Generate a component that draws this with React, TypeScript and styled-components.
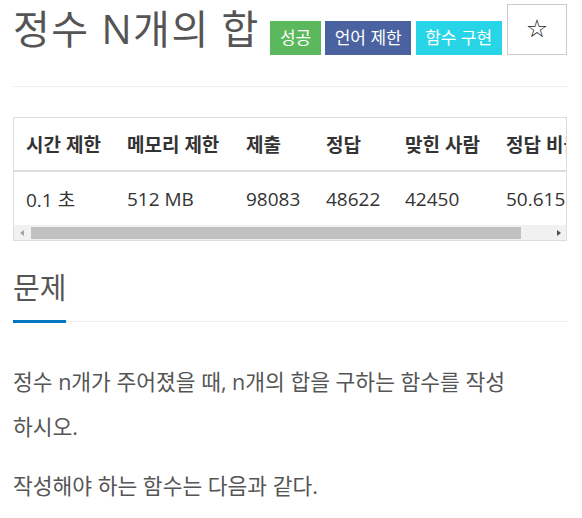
import React from "react";
import styled, { createGlobalStyle } from "styled-components";

const Global = createGlobalStyle`
  html, body { margin: 0; padding: 0; background: #fff; overflow: hidden; }
  body { font-family: "Open Sans", "Noto Sans CJK KR", sans-serif; color: #555; }
`;

const Page = styled.div`
  padding: 0 15px 0 13px;
`;

const Header = styled.div`
  display: flex;
  justify-content: space-between;
  align-items: flex-start;
  height: 87px;
  box-sizing: border-box;
  padding-top: 4px;
  border-bottom: 1px solid #eee;
`;

const Title = styled.h1`
  display: flex;
  align-items: baseline;
  gap: 4.5px;
  margin: 3px 0 0 0;
  font-weight: 400;
`;

const TitleText = styled.span`
  font-size: 40px;
  letter-spacing: 1.5px;
  line-height: 1.1;
  color: #555;
  margin-right: 6px;
`;

const Label = styled.span<{ $bg: string }>`
  display: inline-block;
  background: ${(p) => p.$bg};
  color: #fff;
  font-size: 17px;
  line-height: 34px;
  height: 34px;
  padding: 0 9.5px;
  white-space: nowrap;
`;

const StarButton = styled.button`
  width: 60px;
  height: 51px;
  border: 1px solid #ccc;
  background: #fff;
  padding: 0 0 2px 0;
  font-family: "DejaVu Sans", sans-serif;
  font-size: 25px;
  color: #222;
  display: flex;
  align-items: center;
  justify-content: center;
`;

const TableWrap = styled.div`
  margin-top: 30px;
  border: 1px solid #ddd;
`;

const Viewport = styled.div`
  overflow: hidden;
`;

const Table = styled.table`
  width: 587px;
  table-layout: fixed;
  border-collapse: collapse;
  color: #333;
`;

const Th = styled.th`
  height: 52px;
  padding: 0 12px;
  text-align: left;
  font-weight: 700;
  font-size: 19px;
  white-space: nowrap;
  overflow: hidden;
  border-bottom: 2px solid #ddd;
  vertical-align: middle;
`;

const Td = styled.td`
  height: 53px;
  padding: 0 12px;
  font-size: 19px;
  white-space: nowrap;
  vertical-align: middle;
`;

const ScrollBar = styled.div`
  display: flex;
  height: 15px;
  background: #f1f1f1;
`;

const ArrowButton = styled.div<{ $dir: "left" | "right"; $color: string }>`
  width: 15px;
  height: 15px;
  display: flex;
  align-items: center;
  justify-content: center;
  &::before {
    content: "";
    width: 0;
    height: 0;
    border-top: 3.5px solid transparent;
    border-bottom: 3.5px solid transparent;
    ${(p) =>
      p.$dir === "left"
        ? `border-right: 4px solid ${p.$color};`
        : `border-left: 4px solid ${p.$color};`}
  }
`;

const Track = styled.div`
  flex: 1;
  display: flex;
  align-items: center;
`;

const Thumb = styled.div`
  margin-left: 2px;
  width: 490px;
  height: 12px;
  background: #c1c1c1;
`;

const Headline = styled.div`
  margin-top: 31px;
  display: flex;
  border-bottom: 1px dotted #ddd;
`;

const H2 = styled.h2`
  margin: 0 0 -2px 0;
  padding-bottom: 16px;
  font-size: 29px;
  line-height: 1.1;
  font-weight: 400;
  color: #555;
  border-bottom: 3px solid #0076c0;
`;

const Description = styled.div`
  margin-top: 37px;
  max-width: 500px;
  font-size: 21.5px;
  line-height: 45px;
  color: #555;
`;

const Para = styled.p`
  margin: 0 0 14px 0;
`;

const cols = [101, 119, 80, 79, 101, 107];
const heads = ["시간 제한", "메모리 제한", "제출", "정답", "맞힌 사람", "정답 비율"];
const vals = ["0.1 초", "512 MB", "98083", "48622", "42450", "50.615%"];

export default function App() {
  return (
    <Page>
      <Global />
      <Header>
        <Title>
          <TitleText>정수 N개의 합</TitleText>
          <Label $bg="#5cb85c">성공</Label>
          <Label $bg="#4a63a0">언어 제한</Label>
          <Label $bg="#28d5e6">함수 구현</Label>
        </Title>
        <StarButton>☆</StarButton>
      </Header>
      <TableWrap>
        <Viewport>
          <Table>
            <colgroup>
              {cols.map((w, i) => (
                <col key={i} style={{ width: w }} />
              ))}
            </colgroup>
            <thead>
              <tr>
                {heads.map((h) => (
                  <Th key={h}>{h}</Th>
                ))}
              </tr>
            </thead>
            <tbody>
              <tr>
                {vals.map((v) => (
                  <Td key={v}>{v}</Td>
                ))}
              </tr>
            </tbody>
          </Table>
        </Viewport>
        <ScrollBar>
          <ArrowButton $dir="left" $color="#a3a3a3" />
          <Track>
            <Thumb />
          </Track>
          <ArrowButton $dir="right" $color="#505050" />
        </ScrollBar>
      </TableWrap>
      <Headline>
        <H2>문제</H2>
      </Headline>
      <Description>
        <Para>정수 n개가 주어졌을 때, n개의 합을 구하는 함수를 작성하시오.</Para>
        <Para>작성해야 하는 함수는 다음과 같다.</Para>
      </Description>
    </Page>
  );
}
